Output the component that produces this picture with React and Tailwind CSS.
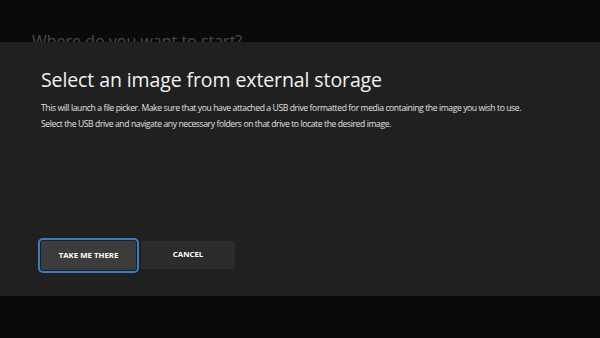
import React from 'react';

export default function App() {
  const font = { fontFamily: '"Open Sans", "Noto Sans", sans-serif' };
  return <div className="w-[600px] h-[338px] bg-[#0a0a0a] overflow-hidden flex flex-col" style={font}>
      {/* page behind the dialog, partly covered */}
      <div className="h-[42px] overflow-hidden pl-[32px] pt-[31px] shrink-0">
        <p className="text-[16px] leading-[20px] text-[#4a4a4a] whitespace-nowrap">Where do you want to start?</p>
      </div>

      <div className="h-[254px] bg-[#202020] pl-[41px] pt-[26px] flex flex-col shrink-0">
        <h1 className="text-[19.5px] leading-[24px] text-[#f2f2f2] whitespace-nowrap tracking-[-0.1px]">Select an image from external storage</h1>
        <div className="mt-[9px] text-[8.6px] leading-[15.5px] text-[#e0e0e0] tracking-[-0.4px]">
          <p className="whitespace-nowrap">This will launch a file picker. Make sure that you have attached a USB drive formatted for media containing the image you wish to use.</p>
          <p className="whitespace-nowrap">Select the USB drive and navigate any necessary folders on that drive to locate the desired image.</p>
        </div>

        <div className="mt-[109px] flex gap-[5px]">
          <button className="w-[95px] h-[29px] bg-[#3c3c3c] rounded-[2px] ring-2 ring-[#3d7dbd] ring-offset-1 ring-offset-[#14202c] text-[7.8px] font-bold text-white">TAKE ME THERE</button>
          <button className="w-[94px] h-[28px] bg-[#2c2c2c] rounded-[2px] text-[7.8px] font-bold text-white">CANCEL</button>
        </div>
      </div>
    </div>;
}
